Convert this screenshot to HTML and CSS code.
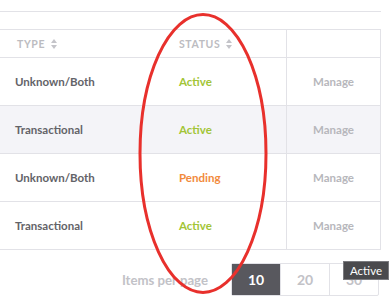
FILE: index.html
```html
<!DOCTYPE html>
<html>
<head>
<meta charset="utf-8">
<link rel="stylesheet" href="styles.css">
</head>
<body>
<div class="wrap">
  <div class="topline"></div>
  <div class="table">
    <div class="row head">
      <div class="cell type">TYPE <span class="sort"><svg width="6" height="10" viewBox="0 0 6 10"><path d="M3 0 L6 4 H0 Z M0 6 H6 L3 10 Z" fill="#c4c4c9"/></svg></span></div>
      <div class="cell status">STATUS <span class="sort"><svg width="6" height="10" viewBox="0 0 6 10"><path d="M3 0 L6 4 H0 Z M0 6 H6 L3 10 Z" fill="#c4c4c9"/></svg></span></div>
      <div class="cell manage"></div>
    </div>
    <div class="row">
      <div class="cell type">Unknown/Both</div>
      <div class="cell status active">Active</div>
      <div class="cell manage">Manage</div>
    </div>
    <div class="row alt">
      <div class="cell type">Transactional</div>
      <div class="cell status active">Active</div>
      <div class="cell manage">Manage</div>
    </div>
    <div class="row">
      <div class="cell type">Unknown/Both</div>
      <div class="cell status pending">Pending</div>
      <div class="cell manage">Manage</div>
    </div>
    <div class="row">
      <div class="cell type">Transactional</div>
      <div class="cell status active">Active</div>
      <div class="cell manage">Manage</div>
    </div>
  </div>
  <div class="pager">
    <span class="label">Items per page</span>
    <div class="btns">
      <div class="btn on">10</div>
      <div class="btn">20</div>
      <div class="btn">30</div>
    </div>
    <div class="tip">Active</div>
  </div>
  <svg class="circle" width="392" height="306" viewBox="0 0 392 306"><ellipse cx="203" cy="153.5" rx="63" ry="139" fill="none" stroke="#e8302c" stroke-width="3"/></svg>
</div>
</body>
</html>
```
FILE: styles.css
```css
html, body { margin: 0; padding: 0; background: #fff; }
body { font-family: "Lato", "Open Sans", sans-serif; width: 392px; height: 306px; overflow: hidden; }
.wrap { position: relative; width: 381px; height: 306px; }
.topline { height: 11px; border-bottom: 1px solid #e2e2e7; }
.table { margin-top: 17px; border-top: 1px solid #e2e2e7; border-right: 1px solid #e2e2e7; width: 380px; }
.row { display: grid; grid-template-columns: 165px 121px 94px; height: 47px; border-bottom: 1px solid #e2e2e7; }
.row.head { height: 27px; }
.row.alt { background: #f4f4f8; }
.cell { display: flex; align-items: center; font-size: 11.5px; font-weight: 700; }
.type { padding-left: 15px; color: #636368; }
.status { padding-left: 14px; }
.head .cell { font-size: 10.5px; color: #bcbcc1; letter-spacing: 0.6px; padding-top: 1px; }
.head .type { padding-left: 17px; }
.sort { display: inline-flex; margin-left: 6px; }
.manage { border-left: 1px solid #e2e2e7; justify-content: center; color: #b7b7bc; }
.active { color: #a2c536; }
.pending { color: #f28a3c; }
.pager { position: relative; display: flex; justify-content: flex-end; align-items: center; margin-top: 13px; width: 379px; }
.label { font-size: 13.2px; font-weight: 700; color: #c2c2c7; margin-right: 23px; }
.btns { display: flex; border: 1px solid #e2e2e7; border-radius: 2px; }
.btn { width: 48px; height: 31px; display: flex; align-items: center; justify-content: center; font-size: 14px; font-weight: 700; color: #c2c2c7; border-left: 1px solid #e2e2e7; }
.btn:first-child { border-left: none; }
.btn.on { background: #58585e; color: #fff; }
.tip { position: absolute; left: 343px; top: -2px; width: 44px; height: 17px; background: #4a4a4d; border: 1px solid #7a7a7e; color: #fff; font-size: 11.5px; display: flex; align-items: center; justify-content: center; }
.circle { position: absolute; left: 0; top: 0; pointer-events: none; }
```
